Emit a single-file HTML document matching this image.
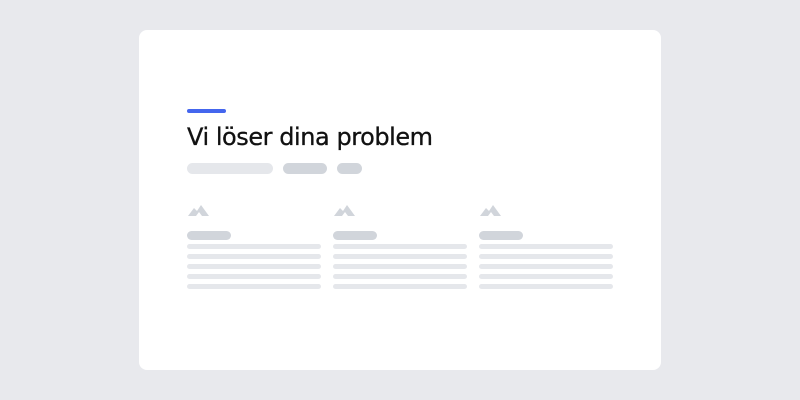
<!DOCTYPE html><html><head><style>
body{margin:0;width:800px;height:400px;background:#e8e9ed;position:relative;font-family:"Liberation Sans",sans-serif;overflow:hidden}
.card{position:absolute;left:139px;top:30px;width:522px;height:340px;background:#fff;border-radius:8px}
.a{position:absolute;border-radius:6px}
h1{position:absolute;left:187px;top:123px;margin:0;font-size:24px;font-weight:normal;color:#111;font-family:"DejaVu Sans","Liberation Sans",sans-serif;letter-spacing:-0.45px;-webkit-text-stroke:0.3px #111}
</style></head><body>
<div class="card"></div>
<div class="a" style="left:187px;top:109px;width:39px;height:4px;background:#4466ee;border-radius:2px"></div>
<h1>Vi löser dina problem</h1>
<div class="a" style="left:187px;top:163px;width:86px;height:11px;background:#e5e7eb"></div>
<div class="a" style="left:283px;top:163px;width:44px;height:11px;background:#d1d5db"></div>
<div class="a" style="left:337px;top:163px;width:25px;height:11px;background:#d1d5db"></div>
<div id="cols"></div>
<script>
var h='';[187,333,479].forEach(function(x){
h+='<svg style="position:absolute;left:'+(x+1)+'px;top:204px" width="22" height="13" viewBox="0 0 22 13"><path d="M0 12 L6 4 L9 7 L13 1 L21 12 L14 12 L11 8 L8 12Z" fill="#d1d5db"/></svg>';
h+='<div class="a" style="left:'+x+'px;top:231px;width:44px;height:9px;background:#d1d5db"></div>';
for(var i=0;i<5;i++)h+='<div class="a" style="left:'+x+'px;top:'+(244+i*10)+'px;width:134px;height:5px;background:#e5e7eb;border-radius:3px"></div>';
});document.getElementById('cols').innerHTML=h;
</script>
</body></html>
